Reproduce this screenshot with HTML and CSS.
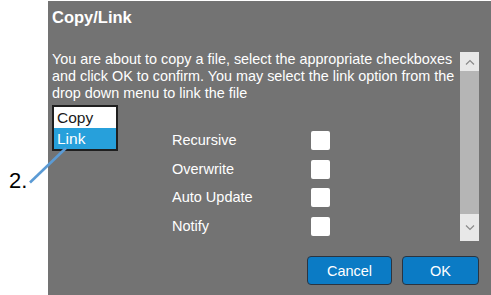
FILE: index.html
```html
<!DOCTYPE html>
<html lang="en">
<head>
    <meta charset="UTF-8">
    <meta name="viewport" content="width=device-width, initial-scale=1.0">
    <link rel="stylesheet" href="styles.css">
    <title>Copy/Link</title>
</head>
<body>
    <div class="page">
        <div class="dialog">
            <h1 class="dialog-title">Copy/Link</h1>
            <div class="dialog-body">
                <div class="content">
                    <p class="intro">You are about to copy a file, select the appropriate checkboxes and click OK to confirm. You may select the link option from the drop down menu to link the file</p>
                    <div class="options">
                        <div class="mode-list">
                            <div class="mode">Copy</div>
                            <div class="mode selected">Link</div>
                        </div>
                        <div class="checks">
                            <div class="check-row"><span class="check-label">Recursive</span><span class="box"></span></div>
                            <div class="check-row"><span class="check-label">Overwrite</span><span class="box"></span></div>
                            <div class="check-row"><span class="check-label">Auto Update</span><span class="box"></span></div>
                            <div class="check-row"><span class="check-label">Notify</span><span class="box"></span></div>
                        </div>
                    </div>
                </div>
                <div class="scrollbar">
                    <div class="sb-btn">
                        <svg width="10" height="6" viewBox="0 0 10 6"><path d="M1 5.5 L5 1.5 L9 5.5" fill="none" stroke="#8a8a8a" stroke-width="1.2"/></svg>
                    </div>
                    <div class="sb-track"></div>
                    <div class="sb-btn">
                        <svg width="10" height="6" viewBox="0 0 10 6"><path d="M1 0.5 L5 4.5 L9 0.5" fill="none" stroke="#8a8a8a" stroke-width="1.2"/></svg>
                    </div>
                </div>
            </div>
            <div class="actions">
                <button class="btn cancel">Cancel</button>
                <button class="btn ok">OK</button>
            </div>
        </div>

        <!-- step marker pointing at the dropdown -->
        <span class="callout">2.</span>
        <svg class="callout-line" width="491" height="295" viewBox="0 0 491 295">
            <line x1="30" y1="182.5" x2="66" y2="148" stroke="#5b9bd5" stroke-width="2.6"/>
        </svg>
    </div>
</body>
</html>
```

FILE: styles.css
```css
body{
    margin: 0px;
    background: #ffffff;
    font-family: "Liberation Sans", Arial, sans-serif;
}
.page{
    position: relative;
    width: 491px;
    height: 295px;
    overflow: hidden;
}
.dialog{
    box-sizing: border-box;
    margin-left: 48px;
    margin-top: 1px;
    width: 443px;
    height: 294px;
    padding: 7px 12px 0px 4px;
    background: #737373;
    color: #ffffff;
    display: flex;
    flex-direction: column;
}
.dialog-title{
    margin: 0px;
    font-size: 16.5px;
    line-height: 18px;
    font-weight: bold;
    height: 18px;
}
.dialog-body{
    margin-top: 25px;
    height: 190px;
    display: flex;
}
.content{
    flex: 1;
}
.intro{
    margin: 0px;
    font-size: 14.4px;
    line-height: 17px;
    padding-right: 1px;
}
.options{
    display: flex;
    margin-top: 3px;
}
.mode-list{
    width: 62px;
    border: 2px solid #1f1f1f;
    background: #ffffff;
    align-self: flex-start;
}
.mode{
    height: 21px;
    line-height: 21px;
    font-size: 15.5px;
    padding-left: 3px;
    color: #1a1a1a;
}
.mode.selected{
    background: #27a0db;
    color: #ffffff;
}
.checks{
    margin-left: 54px;
    padding-top: 26px;
    display: flex;
    flex-direction: column;
    gap: 9.7px;
}
.check-row{
    display: flex;
    align-items: center;
    height: 19px;
}
.check-label{
    width: 139px;
    font-size: 14.5px;
    line-height: 19px;
}
.box{
    width: 19px;
    height: 19px;
    background: #ffffff;
    border-radius: 2px;
}
.scrollbar{
    margin-top: 1px;
    width: 19px;
    height: 189px;
    display: flex;
    flex-direction: column;
    background: #b5b5b5;
}
.sb-btn{
    height: 19px;
    background: #e8e8e8;
    display: flex;
    align-items: center;
    justify-content: center;
}
.sb-btn:last-child{
    height: 27px;
}
.sb-track{
    flex: 1;
}
.actions{
    margin-top: 15px;
    display: flex;
    justify-content: flex-end;
    gap: 10px;
}
.btn{
    height: 29px;
    border: 1px solid #2b3440;
    border-radius: 4px;
    background: #0b7bc5;
    color: #ffffff;
    font-family: "Liberation Sans", Arial, sans-serif;
    font-size: 14.5px;
    padding: 0px;
}
.cancel{ width: 85px; }
.ok{ width: 77px; }
.callout{
    position: absolute;
    left: 9px;
    top: 168px;
    font-size: 22px;
    line-height: 26px;
    color: #000000;
}
.callout-line{
    position: absolute;
    left: 0px;
    top: 0px;
    pointer-events: none;
}
```
